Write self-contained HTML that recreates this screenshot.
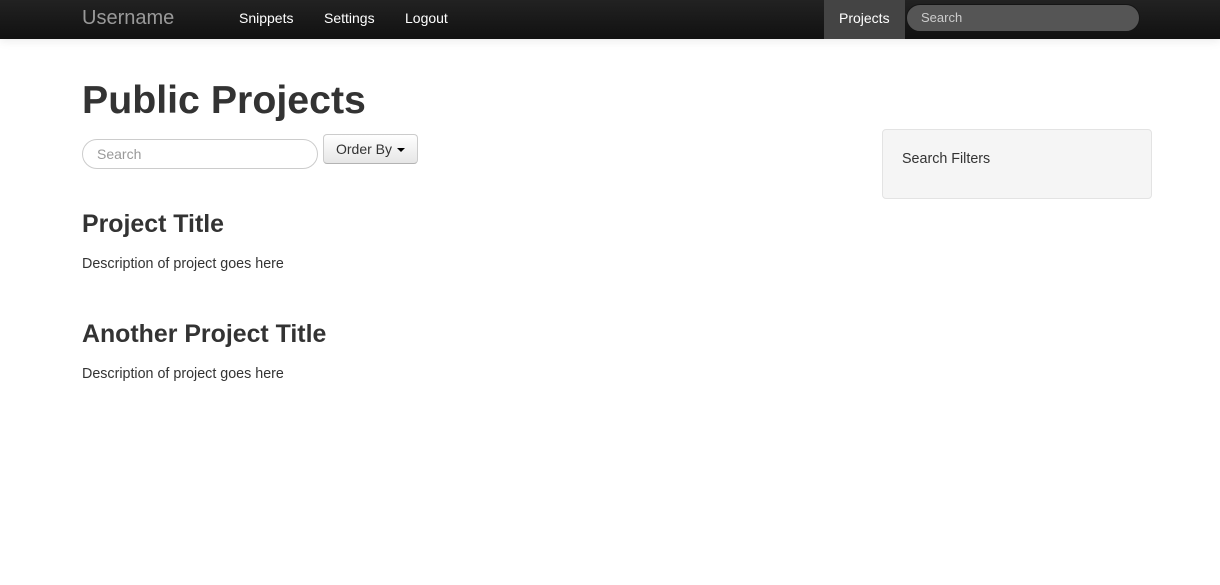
<!DOCTYPE html>
<html><head><style>
body{margin:0;font-family:"Liberation Sans",Helvetica,Arial,sans-serif;color:#333;background:#fff;width:1220px;height:585px;overflow:hidden;position:relative;font-size:14px}
.nav{position:absolute;left:0;top:0;width:1220px;height:39px;background:linear-gradient(#222,#111);box-shadow:0 1px 10px rgba(0,0,0,.1)}
.a{position:absolute;color:#fff;font-size:14px;top:10px}
.brand{position:absolute;left:82px;top:7px;font-size:20px;color:#999}
.act{position:absolute;left:824px;top:0;width:81px;height:39px;background:#444}
.ns{position:absolute;left:906px;top:4px;width:234px;height:28px;border-radius:14px;background:#555;border:1px solid #151515;box-sizing:border-box;color:#ccc;font-size:13px;padding:5px 0 0 14px}
h1{position:absolute;left:82px;top:78px;margin:0;font-size:39.3px;font-weight:bold;color:#333}
.s{position:absolute;left:82px;top:139px;width:236px;height:30px;border:1px solid #ccc;border-radius:15px;box-sizing:border-box;color:#999;padding:6px 0 0 14px}
.btn{position:absolute;left:323px;top:134px;width:95px;height:30px;box-sizing:border-box;border:1px solid #ccc;border-bottom-color:#b3b3b3;border-radius:4px;background:linear-gradient(#fff,#e6e6e6);padding:6px 0 0 12px}
.car{display:inline-block;border-top:4px solid #000;border-left:4px solid transparent;border-right:4px solid transparent;vertical-align:middle;margin-left:1px}
h2{position:absolute;left:82px;margin:0;font-size:24.9px;font-weight:bold}
p{position:absolute;left:82px;margin:0;font-size:14.3px}
.well{position:absolute;left:882px;top:129px;width:270px;height:70px;box-sizing:border-box;background:#f5f5f5;border:1px solid #e3e3e3;border-radius:4px;padding:21px 0 0 19px;font-size:14.3px}
</style></head><body>
<div class="nav">
<div class="brand">Username</div>
<div class="a" style="left:239px">Snippets</div>
<div class="a" style="left:324px">Settings</div>
<div class="a" style="left:405px">Logout</div>
<div class="act"></div>
<div class="a" style="left:839px">Projects</div>
<div class="ns">Search</div>
</div>
<h1>Public Projects</h1>
<div class="s">Search</div>
<div class="btn">Order By <span class="car"></span></div>
<div class="well">Search Filters</div>
<h2 style="top:210px">Project Title</h2>
<p style="top:256px">Description of project goes here</p>
<h2 style="top:320px">Another Project Title</h2>
<p style="top:366px">Description of project goes here</p>
</body></html>
